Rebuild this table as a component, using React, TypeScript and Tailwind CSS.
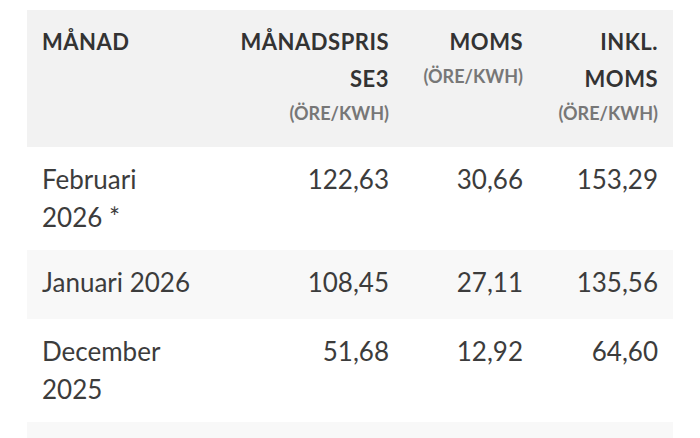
import React from 'react';

type Row = { month: string; price: string; vat: string; total: string };

const rows: Row[] = [
  { month: 'Februari 2026\u00a0*', price: '122,63', vat: '30,66', total: '153,29' },
  { month: 'Januari 2026', price: '108,45', vat: '27,11', total: '135,56' },
  { month: 'December 2025', price: '51,68', vat: '12,92', total: '64,60' },
  { month: 'November 2025', price: '60,12', vat: '15,03', total: '75,15' },
];

function Head({ label, unit, align = 'right' }: { label: string; unit?: string; align?: 'left' | 'right' }) {
  return (
    <th
      className={`px-[15px] pt-[13px] pb-[18px] align-top font-bold uppercase text-[22px] leading-[37px] tracking-[0.5px] text-[#333] ${
        align === 'left' ? 'text-left' : 'text-right'
      }`}
    >
      {label}
      {unit && (
        <span className="block text-[18px] leading-[31px] pt-[1px] font-bold tracking-normal text-[#777]">{unit}</span>
      )}
    </th>
  );
}

export default function App() {
  return (
    <div className="bg-white pt-[10px] px-[27px] overflow-hidden h-[438px]">
      <table
        className="w-full border-collapse table-fixed text-[#3c3c3c]"
        style={{ fontFamily: 'Lato, "Noto Sans", sans-serif' }}
      >
        <colgroup>
          <col className="w-[194px]" />
          <col className="w-[183px]" />
          <col className="w-[134px]" />
          <col className="w-[135px]" />
        </colgroup>
        <thead className="bg-[#f2f2f2]">
          <tr>
            <Head label="Månad" align="left" />
            <Head label="Månadspris SE3" unit="(öre/kWh)" />
            <Head label="Moms" unit="(öre/kWh)" />
            <Head label="Inkl. moms" unit="(öre/kWh)" />
          </tr>
        </thead>
        <tbody>
          {rows.map((r, i) => (
            <tr key={r.month} className={i % 2 === 1 ? 'bg-[#f8f8f8]' : 'bg-white'}>
              <td className="px-[15px] pt-[13px] pb-[14px] align-top text-[26px] leading-[38px]">{r.month}</td>
              <td className="px-[15px] pt-[13px] pb-[18px] align-top text-right text-[26px] leading-[38px]">{r.price}</td>
              <td className="px-[15px] pt-[13px] pb-[18px] align-top text-right text-[26px] leading-[38px]">{r.vat}</td>
              <td className="px-[15px] pt-[13px] pb-[18px] align-top text-right text-[26px] leading-[38px]">{r.total}</td>
            </tr>
          ))}
        </tbody>
      </table>
    </div>
  );
}
